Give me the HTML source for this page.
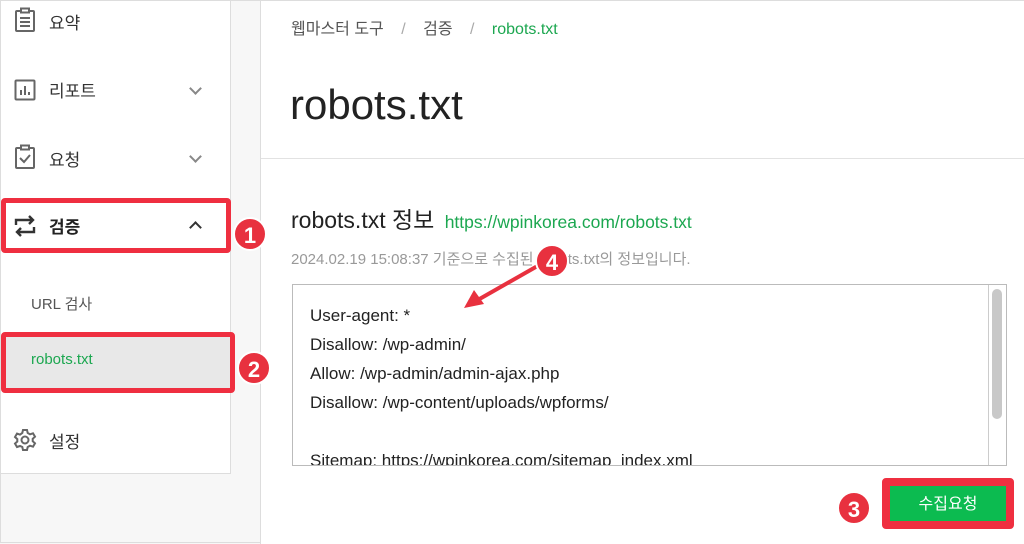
<!DOCTYPE html>
<html><head><meta charset="utf-8"><style>
*{margin:0;padding:0;box-sizing:border-box}
body{width:1024px;height:543px;overflow:hidden;background:#f7f7f7;font-family:"Liberation Sans","Noto Sans CJK KR",sans-serif;position:relative;border:1px solid #ddd}
.a{position:absolute}
.side{left:0;top:0;width:230px;height:473px;background:#fff;border-right:1px solid #ddd;border-bottom:1px solid #ddd}
.main{left:259px;top:0;width:765px;height:543px;background:#fff;border-left:1px solid #ddd}
.mi{font-size:17px;color:#333}
.chev{width:9px;height:9px;border-right:2px solid #888;border-bottom:2px solid #888;transform:rotate(45deg)}
.badge{width:34px;height:34px;border-radius:50%;background:#e8313f;color:#fff;font-weight:bold;font-size:22px;text-align:center;line-height:34px;border:2px solid #fff}
.red{border:5px solid #ef2f40;border-radius:4px}
.code{font-size:17px;color:#222;line-height:29px}
</style></head><body>
<div class="a side"></div>
<div class="a main"></div>
<div class="a" style="left:260px;top:157px;width:764px;height:1px;background:#e2e2e2"></div>

<svg class="a" style="left:13px;top:6px" width="22" height="26" viewBox="0 0 22 26" fill="none" stroke="#666" stroke-width="2"><rect x="2" y="4" width="18" height="20" rx="1"/><rect x="7" y="1.5" width="8" height="4" fill="#fff"/><path d="M6 11h10M6 15h10M6 19h10"/></svg>
<div class="a mi" style="left:48px;top:8px">요약</div>
<svg class="a" style="left:13px;top:78px" width="22" height="22" viewBox="0 0 22 22" fill="none" stroke="#666" stroke-width="2"><rect x="1.5" y="1.5" width="19" height="19" rx="1"/><path d="M7 16V11M11 16V7M15 16v-3"/></svg>
<div class="a mi" style="left:48px;top:76px">리포트</div>
<div class="a chev" style="left:190px;top:83px"></div>
<svg class="a" style="left:13px;top:143px" width="22" height="26" viewBox="0 0 22 26" fill="none" stroke="#666" stroke-width="2"><rect x="2" y="4" width="18" height="20" rx="1"/><rect x="7" y="1.5" width="8" height="4" fill="#fff"/><path d="M6 14l4 4 6-7"/></svg>
<div class="a mi" style="left:48px;top:145px">요청</div>
<div class="a chev" style="left:190px;top:151px"></div>

<div class="a red" style="left:0;top:197px;width:230px;height:55px"></div>
<svg class="a" style="left:13px;top:213px" width="22" height="24" viewBox="0 0 22 24" fill="none" stroke="#333" stroke-width="2.4"><path d="M2 11V6h17M15 2l4 4-4 4M20 13v5H3M7 14l-4 4 4 4"/></svg>
<div class="a mi" style="left:48px;top:212px;font-weight:bold;color:#222">검증</div>
<div class="a chev" style="left:190px;top:222px;transform:rotate(-135deg);border-color:#333"></div>
<div class="a badge" style="left:232px;top:216px">1</div>

<div class="a" style="left:30px;top:292px;font-size:15px;color:#555">URL 검사</div>
<div class="a" style="left:0;top:331px;width:234px;height:61px;background:#e8e8e8;border:5px solid #ef2f40;border-radius:4px"></div>
<div class="a" style="left:30px;top:350px;font-size:15px;color:#1ca750">robots.txt</div>
<div class="a badge" style="left:236px;top:350px">2</div>

<svg class="a" style="left:12px;top:427px" width="24" height="24" viewBox="0 0 24 24" fill="none" stroke="#666" stroke-width="2"><circle cx="12" cy="12" r="3.5"/><path d="M10 2h4l.7 3 2.3 1.3 3-1 2 3.4-2.3 2.1v2.4l2.3 2.1-2 3.4-3-1-2.3 1.3-.7 3h-4l-.7-3L7 18l-3 1-2-3.4 2.3-2.1v-2.4L2 9l2-3.4 3 1L9.3 5z"/></svg>
<div class="a mi" style="left:48px;top:427px">설정</div>

<div class="a" style="left:290px;top:14px;font-size:16px;color:#555">웹마스터 도구 <span style="color:#aaa;margin:0 13px">/</span> 검증 <span style="color:#aaa;margin:0 13px">/</span> <span style="color:#1ca750">robots.txt</span></div>
<div class="a" style="left:289px;top:80px;font-size:42px;color:#222">robots.txt</div>
<div class="a" style="left:290px;top:200px;font-size:23px;color:#222">robots.txt 정보 <span style="font-size:17.5px;color:#1ca750;margin-left:4px">https://wpinkorea.com/robots.txt</span></div>
<div class="a" style="left:290px;top:247px;font-size:15px;color:#999">2024.02.19 15:08:37 기준으로 수집된 robots.txt의 정보입니다.</div>

<div class="a" style="left:291px;top:283px;width:715px;height:182px;border:1px solid #bbb;overflow:hidden">
<div class="a code" style="left:17px;top:16px">User-agent: *<br>Disallow: /wp-admin/<br>Allow: /wp-admin/admin-ajax.php<br>Disallow: /wp-content/uploads/wpforms/<br><br>Sitemap: https://wpinkorea.com/sitemap_index.xml</div>
<div class="a" style="left:695px;top:0;width:1px;height:182px;background:#ccc"></div>
<div class="a" style="left:696px;top:0;width:18px;height:182px;background:#fff"></div>
<div class="a" style="left:699px;top:4px;width:10px;height:130px;border-radius:5px;background:#c8c8c8"></div>
</div>

<svg class="a" style="left:455px;top:255px" width="100" height="60" viewBox="0 0 100 60"><path d="M85 8L20 45" stroke="#e8313f" stroke-width="4"/><path d="M8 52l10-18 10 14z" fill="#e8313f"/></svg>
<div class="a badge" style="left:534px;top:243px">4</div>

<div class="a red" style="left:881px;top:477px;width:132px;height:51px;background:#0cbb50;border-width:8px"></div>
<div class="a" style="left:889px;top:489px;width:116px;text-align:center;color:#fff;font-size:16px">수집요청</div>
<div class="a badge" style="left:836px;top:490px">3</div>
</body></html>
